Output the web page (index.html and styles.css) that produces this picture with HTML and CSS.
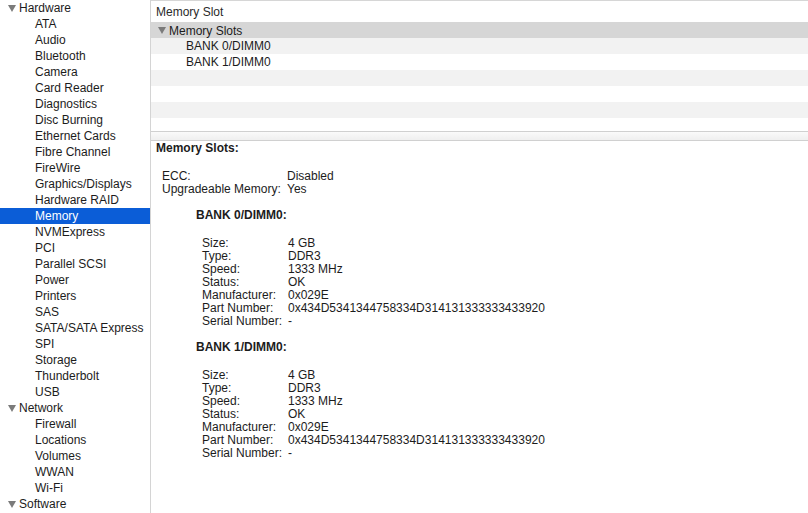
FILE: index.html
```html
<!DOCTYPE html>
<html>
<head>
<meta charset="utf-8">
<link rel="stylesheet" href="styles.css">
</head>
<body>
<div class="app">
  <aside class="sidebar">
    <div class="cat"><svg class="tri" viewBox="0 0 8 7"><polygon points="0,0 8,0 4,7"/></svg>Hardware</div>
    <div class="item">ATA</div>
    <div class="item">Audio</div>
    <div class="item">Bluetooth</div>
    <div class="item">Camera</div>
    <div class="item">Card Reader</div>
    <div class="item">Diagnostics</div>
    <div class="item">Disc Burning</div>
    <div class="item">Ethernet Cards</div>
    <div class="item">Fibre Channel</div>
    <div class="item">FireWire</div>
    <div class="item">Graphics/Displays</div>
    <div class="item">Hardware RAID</div>
    <div class="item selected">Memory</div>
    <div class="item">NVMExpress</div>
    <div class="item">PCI</div>
    <div class="item">Parallel SCSI</div>
    <div class="item">Power</div>
    <div class="item">Printers</div>
    <div class="item">SAS</div>
    <div class="item">SATA/SATA Express</div>
    <div class="item">SPI</div>
    <div class="item">Storage</div>
    <div class="item">Thunderbolt</div>
    <div class="item">USB</div>
    <div class="cat"><svg class="tri" viewBox="0 0 8 7"><polygon points="0,0 8,0 4,7"/></svg>Network</div>
    <div class="item">Firewall</div>
    <div class="item">Locations</div>
    <div class="item">Volumes</div>
    <div class="item">WWAN</div>
    <div class="item">Wi-Fi</div>
    <div class="cat"><svg class="tri" viewBox="0 0 8 7"><polygon points="0,0 8,0 4,7"/></svg>Software</div>
  </aside>
  <main class="content">
    <div class="table">
      <div class="col-title">Memory Slot</div>
      <div class="group-row"><svg class="tri" viewBox="0 0 8 7"><polygon points="0,0 8,0 4,7"/></svg>Memory Slots</div>
      <div class="row odd">BANK 0/DIMM0</div>
      <div class="row">BANK 1/DIMM0</div>
      <div class="row odd"></div>
      <div class="row"></div>
      <div class="row odd"></div>
      <div class="row short"></div>
    </div>
    <div class="splitter"></div>
    <div class="details">
      <div class="heading">Memory Slots:</div>
      <div class="props top">
        <span>ECC:</span><span>Disabled</span>
        <span>Upgradeable Memory:</span><span>Yes</span>
      </div>
      <div class="bank">
        <div class="heading">BANK 0/DIMM0:</div>
        <div class="props sub">
          <span>Size:</span><span>4 GB</span>
          <span>Type:</span><span>DDR3</span>
          <span>Speed:</span><span>1333 MHz</span>
          <span>Status:</span><span>OK</span>
          <span>Manufacturer:</span><span>0x029E</span>
          <span>Part Number:</span><span>0x434D5341344758334D314131333333433920</span>
          <span>Serial Number:</span><span>-</span>
        </div>
      </div>
      <div class="bank">
        <div class="heading">BANK 1/DIMM0:</div>
        <div class="props sub">
          <span>Size:</span><span>4 GB</span>
          <span>Type:</span><span>DDR3</span>
          <span>Speed:</span><span>1333 MHz</span>
          <span>Status:</span><span>OK</span>
          <span>Manufacturer:</span><span>0x029E</span>
          <span>Part Number:</span><span>0x434D5341344758334D314131333333433920</span>
          <span>Serial Number:</span><span>-</span>
        </div>
      </div>
    </div>
  </main>
</div>
</body>
</html>
```

FILE: styles.css
```css
html, body {
  margin: 0;
  padding: 0;
  background: #ffffff;
}
body {
  font-family: "Liberation Sans", Arial, sans-serif;
  font-size: 12px;
  color: #1c1c1c;
  width: 808px;
  height: 513px;
  overflow: hidden;
}
.app {
  display: flex;
  height: 513px;
}
.sidebar {
  width: 150px;
  flex: none;
  border-right: 1px solid #d4d4d4;
  background: #ffffff;
}
.cat, .item {
  height: 16px;
  box-sizing: border-box;
  padding-top: 1px;
  line-height: 15px;
  white-space: nowrap;
}
.cat {
  display: flex;
  align-items: center;
  padding-left: 8px;
}
.tri {
  width: 8px;
  height: 7px;
  fill: #7b7b7b;
  margin-right: 3px;
  flex: none;
}
.item {
  padding-left: 35px;
}
.item.selected {
  background: #0b5dd7;
  color: #ffffff;
}
.content {
  flex: 1;
  display: flex;
  flex-direction: column;
  min-width: 0;
}
.table {
  border-top: 1px solid #d6d6d6;
}
.col-title {
  height: 21px;
  box-sizing: border-box;
  padding: 1px 0 0 5px;
  line-height: 20px;
  color: #2a2a2a;
}
.group-row {
  height: 16px;
  box-sizing: border-box;
  padding: 1px 0 0 7px;
  display: flex;
  align-items: center;
  background: #d6d6d6;
}
.row {
  height: 16px;
  box-sizing: border-box;
  padding: 1px 0 0 35px;
  line-height: 15px;
}
.row.odd {
  background: #f2f2f2;
}
.row.short {
  height: 13px;
}
.splitter {
  height: 8px;
  border-top: 1px solid #d0d0d0;
  border-bottom: 1px solid #d0d0d0;
  background: linear-gradient(#fafafa, #efefef);
}
.details {
  padding: 1px 0 0 5px;
  line-height: 13px;
}
.heading {
  font-weight: bold;
  margin-bottom: 15px;
}
.props {
  display: grid;
  grid-template-columns: 125px auto;
  justify-content: start;
}
.props.top {
  padding-left: 6px;
  margin-bottom: 13px;
}
.bank {
  padding-left: 40px;
  margin-bottom: 13px;
}
.props.sub {
  padding-left: 6px;
  grid-template-columns: 86px auto;
}
```
